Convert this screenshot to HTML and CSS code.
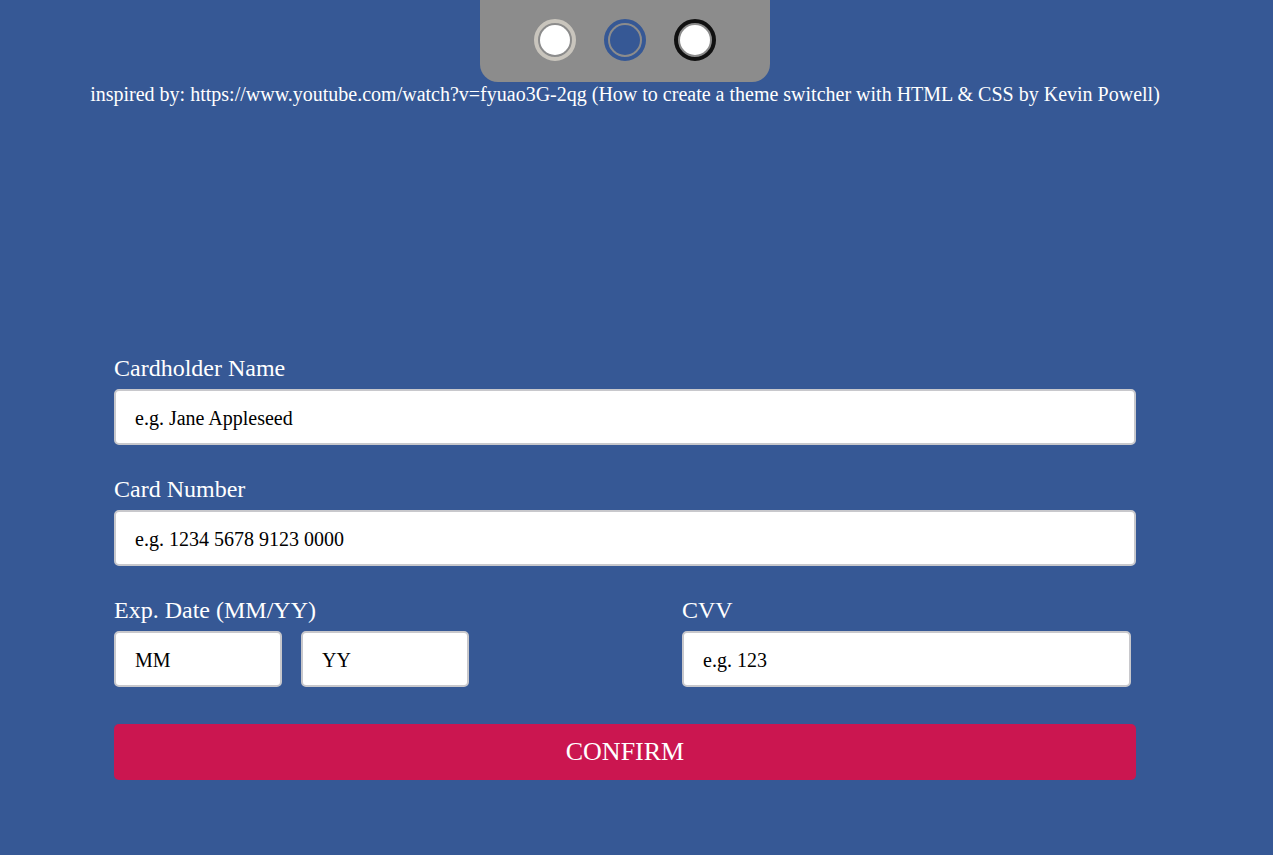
FILE: index.html
```html
<!DOCTYPE html>
<html lang="en">
<head>
<meta charset="utf-8">
<title>Theme switcher</title>
<link rel="stylesheet" href="styles.css">
</head>
<body>
<div class="page">
  <div class="switcher">
    <span class="dot dot-light"></span>
    <span class="dot dot-blue"></span>
    <span class="dot dot-dark"></span>
  </div>
  <p class="credit">inspired by: https://www.youtube.com/watch?v=fyuao3G-2qg (How to create a theme switcher with HTML &amp; CSS by Kevin Powell)</p>
  <form class="card-form">
    <div class="field">
      <label class="label">Cardholder Name</label>
      <div class="input">e.g. Jane Appleseed</div>
    </div>
    <div class="field">
      <label class="label">Card Number</label>
      <div class="input">e.g. 1234 5678 9123 0000</div>
    </div>
    <div class="row">
      <div class="field">
        <label class="label">Exp. Date (MM/YY)</label>
        <div class="date-pair">
          <div class="input input-small">MM</div>
          <div class="input input-small">YY</div>
        </div>
      </div>
      <div class="field">
        <label class="label">CVV</label>
        <div class="input input-cvv">e.g. 123</div>
      </div>
    </div>
    <div class="confirm">CONFIRM</div>
  </form>
</div>
</body>
</html>
```

FILE: styles.css
```css
html, body {
  margin: 0;
  padding: 0;
  background: #365895;
}
body {
  font-family: "Liberation Serif", "Times New Roman", serif;
  color: #ffffff;
  height: 855px;
  overflow: hidden;
}
.page {
  width: 1250px;
  display: flex;
  flex-direction: column;
  align-items: center;
}
.switcher {
  width: 290px;
  height: 82px;
  background: #8c8c8c;
  border-radius: 0 0 18px 18px;
  display: flex;
  justify-content: center;
  align-items: center;
  gap: 28px;
  box-sizing: border-box;
  padding-bottom: 2px;
}
.dot {
  width: 42px;
  height: 42px;
  box-sizing: border-box;
  border-radius: 50%;
  border: 4px solid #c9c5bd;
  padding: 2px;
  background-clip: content-box;
  background-color: #ffffff;
}
.dot-blue {
  border-color: #365895;
  background-color: #365895;
}
.dot-dark {
  border-color: #111111;
  background-color: #ffffff;
}
.credit {
  margin: 1px 0 0;
  font-size: 20px;
  line-height: 23px;
  text-align: center;
}
.card-form {
  width: 1022px;
  margin-top: 250px;
  display: flex;
  flex-direction: column;
}
.field {
  display: flex;
  flex-direction: column;
}
.card-form > .field + .field,
.card-form > .field + .row {
  margin-top: 32px;
}
.label {
  font-size: 24px;
  line-height: 25px;
  margin-bottom: 8px;
}
.input {
  height: 56px;
  box-sizing: border-box;
  background: #ffffff;
  border: 2px solid #c8c8cc;
  border-radius: 5px;
  color: #000000;
  font-size: 20px;
  padding: 3px 19px 0;
  display: flex;
  align-items: center;
}
.row {
  display: flex;
  align-items: flex-start;
}
.row > .field:first-child {
  width: 568px;
}
.date-pair {
  display: flex;
  gap: 19px;
}
.input-small {
  width: 168px;
}
.input-cvv {
  width: 449px;
}
.confirm {
  margin-top: 37px;
  height: 56px;
  background: #cb1650;
  border-radius: 5px;
  display: flex;
  align-items: center;
  justify-content: center;
  font-size: 26px;
  color: #ffffff;
}
```
